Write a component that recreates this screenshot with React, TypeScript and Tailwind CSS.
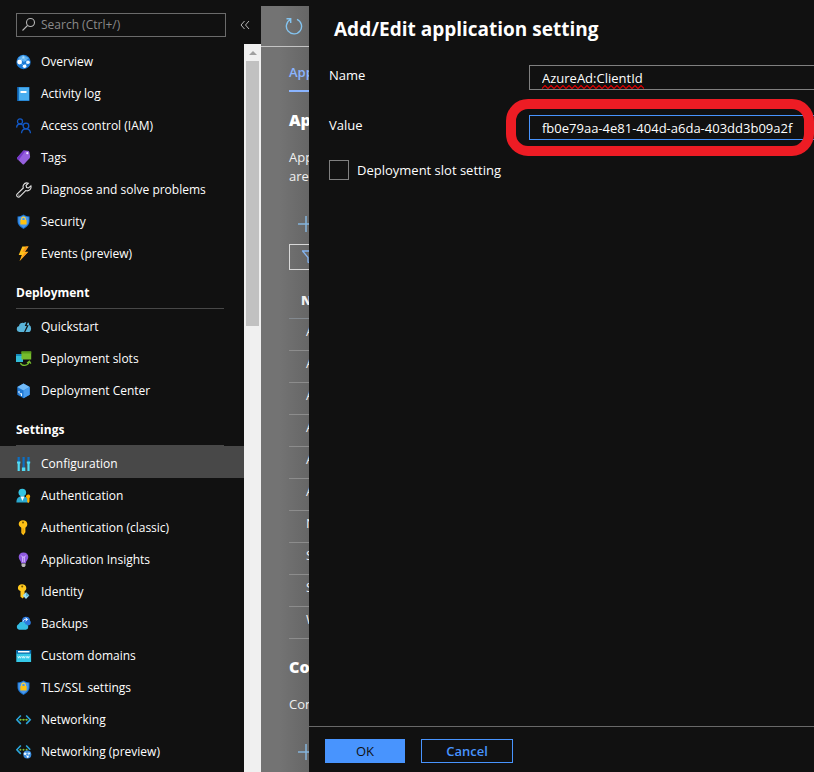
import { useState, type ReactNode } from "react";

type NavItem = { label: string; icon: ReactNode };
type NavGroup = { title?: string; items: NavItem[] };

function Icon({ children }: { children: ReactNode }) {
  return (
    <svg viewBox="0 0 16 16" className="size-4 shrink-0" fill="none" aria-hidden="true">
      {children}
    </svg>
  );
}

const overviewIcon = (
  <Icon>
    <circle cx="7.5" cy="8" r="7.2" fill="#1b7ad6" />
    <path d="M2 4 7 1l6 3-5 4z" fill="#5cb0f0" />
    <path d="M3.5 8 7 3.5l5 5L8 12z" stroke="#8fd0ff" strokeWidth=".7" />
    <circle cx="3.6" cy="8" r="2.4" fill="#fff" />
    <circle cx="12" cy="8.2" r="1.8" fill="#e8f5ff" />
    <circle cx="8.6" cy="12.2" r="1.8" fill="#fff" />
    <circle cx="7.4" cy="3.4" r="1.1" fill="#a8dcff" />
  </Icon>
);
const logIcon = (
  <Icon>
    <path d="M1.2 1h12.300v14H1.200z" fill="#1470c4" />
    <path d="M3 1.400h10v13H3z" fill="#49aef0" />
    <path d="M4.500 5h6v2h-6z" fill="#fff" />
  </Icon>
);
const iamIcon = (
  <Icon>
    <g stroke="#1258c4" strokeWidth="1.3">
      <circle cx="4" cy="3.4" r="2.5" />
      <circle cx="10" cy="8" r="2.8" />
      <path d="M.6 9.600C.8 7.300 2.200 6 4 6c1.300 0 2.300.5 3 1.400M5.500 15.200c.2-2.700 2-4.400 4.500-4.400s4.300 1.700 4.500 4.400" />
    </g>
  </Icon>
);
const tagIcon = (
  <Icon>
    <path d="M7.500.6 11.800.8q1.200.1 1.600 1.200l.7 4.600q.1.900-.5 1.600L8 14.300q-.7.600-1.400 0L1.300 9q-.5-.7 0-1.400z" fill="#9660de" />
    <path d="m1.300 7.600 6.200-7 2 .1-7 9.500L1.300 9q-.5-.7 0-1.400z" fill="#7638c8" />
    <circle cx="11.300" cy="3.200" r="1.100" fill="#f1e6ff" />
  </Icon>
);
const wrenchIcon = (
  <Icon>
    <path
      d="M14.900 3.800 12.500 6 10.600 5.500 10 3.500 12.300 1.200C10.400.5 8.500 1.200 7.600 2.700 7 3.700 6.900 4.800 7.300 6L1.300 11.900c-.9.900-.9 2 0 2.700.8.700 1.900.7 2.700-.2L9.700 8.600c1.500.6 3.200.1 4.300-1 .9-.9 1.300-2.400.9-3.800z"
      stroke="#e0e0e0"
      strokeWidth="1.100"
    />
    <circle cx="2.900" cy="13.100" r=".6" fill="#e0e0e0" />
  </Icon>
);
const shieldIcon = (
  <Icon>
    <path d="M7.500.5c1.800 1.400 3.800 1.800 6 1.900V7.300c0 3.500-2.800 5.900-6 7.700-3.200-1.800-6-4.200-6-7.700V2.400c2.200-.1 4.200-.5 6-1.900z" fill="#1670cc" />
    <path d="M7.500 1.600c1.600 1.100 3.300 1.500 5.100 1.600v4.100c0 3-2.400 5.100-5.100 6.600-2.700-1.500-5.100-3.600-5.100-6.600V3.200c1.800-.1 3.500-.5 5.100-1.600z" fill="#4796ec" />
    <path d="M5.700 6.500V5a1.800 1.800 0 0 1 3.600 0v1.500" stroke="#ffd23c" strokeWidth="1.200" />
    <path d="M4.400 6h6.200v4.500H4.400z" fill="#ffc20e" />
  </Icon>
);
const boltIcon = (
  <Icon>
    <path d="M6.300.5h6.200L8.900 5.800h3.400L3.600 15l2.200-6H2.700z" fill="#ffc21a" />
    <path d="M12.500.5 8.900 5.800H6L10 .5zM12.300 5.800 3.600 15l5-8z" fill="#f9941e" />
  </Icon>
);
const quickstartIcon = (
  <Icon>
    <path d="M3.400 13A3 3 0 0 1 3 7.100 3.500 3.500 0 0 1 8 4l1-.7 1.300 0L8.800 7h2L8 13zM9.300 13l3.300-6.800h-2L12 3.300q1.300.8 1.200 2.800 1.900 1 1.900 3.300Q15.100 13 12 13z" fill="#59b4d9" />
  </Icon>
);
const slotsIcon = (
  <Icon>
    <path d="M0 3h7v8H0z" fill="#32bcd8" />
    <path d="M0 3h7v2H0z" fill="#1689b8" />
    <path d="M5.500.5h9.700v8H5.500z" fill="#76bc2d" />
    <path d="M5.500.5h9.700v2H5.500z" fill="#5a9e1c" />
    <path d="M4.500 12c1 3.300 7.500 3.300 8.700-.8M11 12l2.400-1.800 1.500 2.400" stroke="#76bc2d" strokeWidth="1.200" />
  </Icon>
);
const centerIcon = (
  <Icon>
    <path d="M7.500.5 13.700 4v7.700l-6.200 3.600-6.200-3.600V4z" fill="#1f78d4" />
    <path d="M7.500.5 13.700 4 7.500 7.400 1.300 4z" fill="#72baf7" />
    <path d="M7.500 7.400 13.700 4v7.700l-6.200 3.600z" fill="#489df0" />
    <path d="M3 8v2M3.500 10.700h2v2.200" stroke="#e6f5ff" strokeWidth="1.100" />
  </Icon>
);
const configIcon = (
  <Icon>
    <path d="M1.600 1h2.200v5H1.600zM6.500 1h2.200v11H6.500zM11.400 1h2.200v5h-2.200z" fill="#0c6fc4" />
    <path d="M1 5.600h3.400v1.600l-.6.600V15H1.600V7.800L1 7.200zM10.800 5.600h3.400v1.600l-.6.600V15h-2.200V7.800l-.6-.6zM5.900 11.500h3.400V15H5.900z" fill="#50dbf5" />
  </Icon>
);
const authIcon = (
  <Icon>
    <path d="M.4 14.500c0-4 1.600-6.300 5.900-6.300s6 2.300 6 6.300z" fill="#2ba9cf" />
    <circle cx="6.300" cy="4.500" r="3.800" fill="#35c4e2" />
    <path d="m4.500 8.500 1.900 4.500 2-4.500z" fill="#fff" />
    <path d="M10 8.800a2.100 2.100 0 1 1 3.500 1.300v3.500l-1 1.500-1.300-1V10.600Q10 10 10 8.800z" fill="#ffb000" />
  </Icon>
);
const keyIcon = (
  <Icon>
    <path d="M7 .3c2.400 0 4.300 1.600 4.300 4 0 1.500-.8 2.700-1.900 3.400v4.600L7.300 15.200l-2-2.200V7.700A4 4 0 0 1 2.700 4.300C2.700 1.900 4.600.3 7 .3z" fill="#ffc116" />
    <circle cx="7" cy="2.600" r="1" fill="#7a5a00" />
    <path d="M7.100 8.300v4.500" stroke="#e49700" strokeWidth="1" />
  </Icon>
);
const insightsIcon = (
  <Icon>
    <path d="M7.500.5c2.900 0 4.800 2 4.800 4.600 0 2.700-2.300 3.600-2.500 6.100H5.200C5 8.700 2.700 7.800 2.700 5.100 2.700 2.500 4.600.5 7.500.5z" fill="#8f5ae0" />
    <path d="m5.200 3.500 1.500 1.600v5M9.800 3.500 8.300 5.100v5M6.700 5.100h1.600" stroke="#e0c8ff" strokeWidth=".9" />
    <path d="M5.500 11.500h4v2.300l-1 1.200h-2l-1-1.200z" fill="#b8b8b8" />
  </Icon>
);
const identityIcon = (
  <Icon>
    <path d="M6 .3c2.500 0 4.300 1.500 4.300 3.700 0 1.500-.7 2.500-1.700 3.100v5l-1.800 2.500-2.300-1.800V7.100C3 6.500 1.900 5.500 1.900 4 1.900 1.800 3.600.3 6 .3z" fill="#ffc91e" />
    <circle cx="6.200" cy="2.500" r="1" fill="#735500" />
    <path d="M10 8.300 13.300 11.600 10 14.900 6.700 11.600z" fill="#9bdcf2" />
    <path d="m10 8.300 3.300 3.300L10 12.500z" fill="#58afcf" />
  </Icon>
);
const backupsIcon = (
  <Icon>
    <circle cx="10" cy="4.700" r="4" fill="#2c78dc" />
    <path d="M9 9.500h3.300a2.800 2.800 0 0 0 .5-5.500z" fill="#2c78dc" />
    <path d="M3 13.700A3 3 0 0 1 2.700 8 3.800 3.800 0 0 1 9.800 8.600a2.500 2.500 0 0 1-.2 5.100z" fill="#35bde3" />
    <path d="M7 5.600c.5-2 2-2.700 4.300-2.200M9.600 2l1.900 1.500-1.900 1.500" stroke="#fff" strokeWidth="1" />
  </Icon>
);
const domainsIcon = (
  <Icon>
    <path d="M.3 2h14.800v12H.3z" fill="#35c9e8" />
    <path d="M.3 2h14.800v3.700H.3z" fill="#0867a8" />
    <path d="M2 3h11.500v1.500H2z" fill="#fff" />
    <path d="m1.800 8.200.9 2 .9-2 .9 2 .9-2m.7 0 .8 2 .8-2 .8 2 .8-2m.9 0 .8 2 .8-2 .8 2 .8-2" stroke="#e5fbff" strokeWidth=".8" />
  </Icon>
);
const networkIcon = (
  <Icon>
    <path d="M4.800 3.500.8 7.700l4 4.200M10.200 3.500l4 4.200-4 4.200" stroke="#2ba6dc" strokeWidth="1.600" />
    <path d="M3.600 7.700h8" stroke="#508f19" strokeWidth=".8" />
    <circle cx="4.400" cy="7.700" r="1" fill="#7fbe36" />
    <circle cx="7.500" cy="7.700" r="1" fill="#7fbe36" />
    <circle cx="10.600" cy="7.700" r="1" fill="#7fbe36" />
  </Icon>
);
const networkPreviewIcon = (
  <Icon>
    <path d="M4.800 1.500.8 5.700l4 4.200M10.200 1.500l4 4.200" stroke="#2ba6dc" strokeWidth="1.600" />
    <circle cx="4.400" cy="5.700" r="1" fill="#7fbe36" />
    <circle cx="7.500" cy="5.700" r="1" fill="#7fbe36" />
    <circle cx="10.600" cy="5.700" r="1" fill="#7fbe36" />
    <circle cx="11.300" cy="10.500" r="4" fill="#3b8ee0" />
    <path d="m9 9.500 4-.500-1.500 4z" stroke="#d5ebff" strokeWidth=".6" />
    <circle cx="9" cy="9.800" r="1.300" fill="#e8f5ff" />
    <circle cx="13.200" cy="9.500" r="1" fill="#d9edff" />
    <circle cx="11.700" cy="12.800" r="1" fill="#fff" />
  </Icon>
);

const groups: NavGroup[] = [
  {
    items: [
      { label: "Overview", icon: overviewIcon },
      { label: "Activity log", icon: logIcon },
      { label: "Access control (IAM)", icon: iamIcon },
      { label: "Tags", icon: tagIcon },
      { label: "Diagnose and solve problems", icon: wrenchIcon },
      { label: "Security", icon: shieldIcon },
      { label: "Events (preview)", icon: boltIcon },
    ],
  },
  {
    title: "Deployment",
    items: [
      { label: "Quickstart", icon: quickstartIcon },
      { label: "Deployment slots", icon: slotsIcon },
      { label: "Deployment Center", icon: centerIcon },
    ],
  },
  {
    title: "Settings",
    items: [
      { label: "Configuration", icon: configIcon },
      { label: "Authentication", icon: authIcon },
      { label: "Authentication (classic)", icon: keyIcon },
      { label: "Application Insights", icon: insightsIcon },
      { label: "Identity", icon: identityIcon },
      { label: "Backups", icon: backupsIcon },
      { label: "Custom domains", icon: domainsIcon },
      { label: "TLS/SSL settings", icon: shieldIcon },
      { label: "Networking", icon: networkIcon },
      { label: "Networking (preview)", icon: networkPreviewIcon },
    ],
  },
];

function Sidebar() {
  return (
    <aside className="flex w-[261px] shrink-0 flex-col text-xs leading-5">
      <div className="flex h-11 shrink-0 items-center pt-[6px] pl-4">
        <label className="flex h-6 w-[210px] shrink-0 items-center gap-1 border border-[#6b6b6b] pl-1">
          <svg viewBox="0 0 16 16" className="size-4 shrink-0" fill="none" stroke="#b5b5b5" strokeWidth="1.100" aria-hidden="true">
            <circle cx="9.500" cy="5.500" r="4" />
            <path d="M6.500 8.500 1.500 13.500" />
          </svg>
          <input
            type="search"
            aria-label="Search"
            placeholder="Search (Ctrl+/)"
            className="w-full bg-transparent outline-none placeholder:text-[#8a8a8a]"
          />
        </label>
        <button type="button" aria-label="Collapse menu" className="ml-[11px] flex size-4 items-center justify-center">
          <svg viewBox="0 0 12 12" className="size-3" fill="none" stroke="#b5b5b5" aria-hidden="true">
            <path d="M5.500 2 2 6l3.500 4M10 2 6.500 6l3.500 4" />
          </svg>
        </button>
      </div>
      <div className="flex min-h-0 flex-1">
        <nav className="min-w-0 flex-1 overflow-hidden">
          {groups.map((group) => (
            <section key={group.title ?? "general"}>
              {group.title && (
                <h2 className="mr-5 ml-4 flex h-[41px] items-center border-b border-[#484848] pt-[10px] font-bold">{group.title}</h2>
              )}
              <ul>
                {group.items.map(({ label, icon }) => (
                  <li key={label}>
                    <a
                      href="#"
                      className={
                        label === "Configuration"
                          ? "flex h-8 items-center gap-[9px] bg-[#484848] pt-[3px] pl-4"
                          : "flex h-8 items-center gap-[9px] pt-[3px] pl-4"
                      }
                    >
                      {icon}
                      {label}
                    </a>
                  </li>
                ))}
              </ul>
            </section>
          ))}
        </nav>
        <div className="flex w-[17px] flex-col items-center bg-[#f0f0f0]" aria-hidden="true">
          <div className="flex h-[17px] items-center">
            <svg viewBox="0 0 8 4" className="h-1 w-2" fill="#a0a0a0">
              <path d="M4 0 8 4H0z" />
            </svg>
          </div>
          <div className="h-[265px] w-[13px] bg-[#c1c1c1]" />
        </div>
      </div>
    </aside>
  );
}

function AddIcon() {
  return (
    <svg viewBox="0 0 16 16" className="size-4 shrink-0" fill="none" stroke="#84b4dc" strokeWidth="1.500" aria-hidden="true">
      <path d="M8 0v16M0 8h16" />
    </svg>
  );
}

const settingInitials = ["A", "A", "A", "A", "A", "A", "N", "S", "S", "W"];

function SettingsPage() {
  return (
    <main className="mt-[6px] w-12 shrink-0 overflow-hidden bg-linear-to-r from-[#737373] from-40% to-[#666666] text-[#f0f0f0]">
      <div className="flex h-[41px] items-center border-b border-[#c4c4c4] pl-6">
        <svg viewBox="0 0 18 18" className="size-[18px] shrink-0" fill="none" stroke="#84c4f0" strokeWidth="1.400" aria-hidden="true">
          <path d="M5.500 2.500A7.600 7.600 0 1 0 12 2.300M1.500 1.800h4.200v4.200" />
        </svg>
      </div>
      <div className="flex flex-col pl-7">
        <div className="flex h-[45px] items-center border-b-2 border-[#8ab4ff] pt-[6px] font-semibold text-[#8ab4ff]">App</div>
        <h2 className="mt-4 text-base leading-6 font-extrabold text-white">Ap</h2>
        <p className="mt-4 leading-[19px]">
          App
          <br />
          are
        </p>
        <div className="mt-[30px] pl-[9px]">
          <AddIcon />
        </div>
        <div className="mt-3 flex h-[26px] shrink-0 items-center border border-r-0 border-[#d8d8d8] pl-3">
          <svg viewBox="0 0 16 16" className="size-4 shrink-0" fill="none" stroke="#84b4f0" strokeWidth="1.300" aria-hidden="true">
            <path d="M.5 2h15L10 8.500V15l-4-2V8.500z" />
          </svg>
        </div>
        <table className="mt-3 w-full">
          <thead>
            <tr className="h-9 border-b border-[#83898f]">
              <th className="pl-3 text-left font-extrabold">N</th>
            </tr>
          </thead>
          <tbody>
            {settingInitials.map((initial, i) => (
              <tr key={i} className="h-8 border-b border-[#8c8c8c]">
                <td className="pb-[6px] pl-[17px]">{initial}</td>
              </tr>
            ))}
          </tbody>
        </table>
        <h2 className="mt-4 text-base leading-6 font-extrabold text-white">Co</h2>
        <p className="mt-4 leading-[19px]">Con</p>
        <div className="mt-[30px] pl-[9px]">
          <AddIcon />
        </div>
      </div>
    </main>
  );
}

function EditPanel() {
  const [name, setName] = useState("AzureAd:ClientId");
  const [value, setValue] = useState("fb0e79aa-4e81-404d-a6da-403dd3b09a2f");
  return (
    <form className="flex min-w-0 flex-1 flex-col overflow-hidden" onSubmit={(e) => e.preventDefault()}>
      <h1 className="pt-[15px] pl-[25px] text-[19px] leading-7 font-bold">Add/Edit application setting</h1>
      <div className="relative mt-[22px] flex h-[25px] pl-5">
        <label htmlFor="setting-name" className="w-[200px] shrink-0 leading-5">
          Name
        </label>
        <input
          id="setting-name"
          value={name}
          spellCheck={false}
          onChange={(e) => setName(e.target.value)}
          className="h-[25px] min-w-0 flex-1 border border-r-0 border-[#808080] bg-transparent pl-3 outline-none"
        />
        <svg className="pointer-events-none absolute bottom-px left-[233px] h-1 w-[102px]" fill="none" aria-hidden="true">
          <defs>
            <pattern id="misspelling" width="6" height="4" patternUnits="userSpaceOnUse">
              <path d="M-1 4.500 3 .5 7 4.500M-3 .5 0 3.500 3 .5 6 3.500 9 .5" stroke="#e00000" strokeWidth="1.200" />
            </pattern>
          </defs>
          <rect width="102" height="4" fill="url(#misspelling)" />
        </svg>
      </div>
      <div className="relative mt-[25px] flex h-[25px] pl-5">
        <label htmlFor="setting-value" className="w-[200px] shrink-0 leading-5">
          Value
        </label>
        <input
          id="setting-value"
          value={value}
          spellCheck={false}
          onChange={(e) => setValue(e.target.value)}
          className="h-[25px] min-w-0 flex-1 border border-r-0 border-[#4894fe] bg-transparent pl-3 outline-none"
        />
        <div className="pointer-events-none absolute -inset-y-4 right-0 left-[197px] rounded-[22px] border-10 border-[#ed1c24]" />
      </div>
      <label className="mt-5 flex items-center gap-2 self-start pl-5">
        <input type="checkbox" className="size-5 appearance-none border border-[#808080] checked:bg-[#4894fe]" />
        Deployment slot setting
      </label>
      <footer className="mt-auto flex h-[46px] gap-4 border-t border-[#696969] px-4 pt-3">
        <button type="submit" className="h-6 w-20 bg-[#4894fe] text-[#111111]">
          OK
        </button>
        <button type="button" className="h-6 w-[92px] border border-[#4894fe] font-semibold text-[#4894fe]">
          Cancel
        </button>
      </footer>
    </form>
  );
}

export default function App() {
  return (
    <div className="flex h-screen overflow-hidden bg-[#111111] font-['Open_Sans','Noto_Sans',sans-serif] text-[13px] leading-5 text-white">
      <Sidebar />
      <SettingsPage />
      <EditPanel />
    </div>
  );
}
